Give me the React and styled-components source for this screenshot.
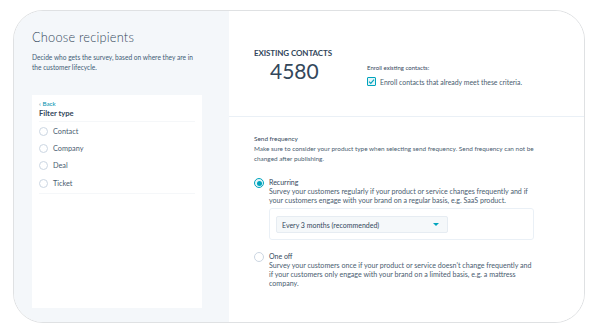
import React from "react";
import styled, { createGlobalStyle } from "styled-components";

const Global = createGlobalStyle`
  html, body { margin: 0; padding: 0; background: #fff; }
  body { font-family: Lato, "Noto Sans", sans-serif; color: #33475b; }
  * { box-sizing: border-box; }
`;

const Frame = styled.div`
  margin: 10px 0 0 13px;
  width: 572px;
  height: 313px;
  border: 1px solid #dfe1e3;
  border-radius: 30px;
  overflow: hidden;
  display: grid;
  grid-template-columns: 215px 1fr;
`;

const Sidebar = styled.aside`
  background: #f4f7fa;
  display: flex;
  flex-direction: column;
  padding: 17px 27px 14px 18px;
`;

const Title = styled.h1`
  margin: 0;
  font-size: 12.8px;
  font-weight: 300;
  letter-spacing: 0.2px;
  color: #33475b;
  line-height: 18px;
`;

const Lead = styled.p`
  margin: 6px 0 0;
  font-size: 6.6px;
  line-height: 10px;
  color: #425b76;
`;

const FilterCard = styled.div`
  margin-top: 23px;
  flex: 1;
  background: #fff;
  padding: 5px 7px;
  display: flex;
  flex-direction: column;
`;

const Back = styled.a`
  font-size: 6.3px;
  color: #0091ae;
  line-height: 8px;
`;

const FilterTitle = styled.div`
  font-size: 7.6px;
  font-weight: 700;
  color: #33475b;
  line-height: 10px;
  padding-bottom: 3px;
  border-bottom: 1px solid #f5f7f9;
`;

const OptionList = styled.div`
  display: flex;
  flex-direction: column;
  gap: 8.2px;
  padding: 5px 0 5px;
  border-bottom: 1px solid #f5f7f9;
`;

const Option = styled.label`
  display: flex;
  align-items: center;
  gap: 5px;
  font-size: 7.3px;
  color: #4a5d70;
  line-height: 9px;
`;

const Radio = styled.span`
  flex: none;
  width: ${p => p.$size || 9}px;
  height: ${p => p.$size || 9}px;
  border-radius: 50%;
  border: 1px solid ${p => (p.$on ? "#00a4bd" : "#cbd6e2")};
  background: ${p => (p.$on ? "#e5f5f8" : "#fff")};
  display: flex;
  align-items: center;
  justify-content: center;
  &::after {
    content: "";
    display: ${p => (p.$on ? "block" : "none")};
    width: 5px;
    height: 5px;
    border-radius: 50%;
    background: #00a4bd;
  }
`;

const Main = styled.main`
  background: #fff;
  display: flex;
  flex-direction: column;
  padding-top: 37px;
`;

const StatsRow = styled.section`
  display: flex;
  padding: 0 0 0 25px;
  height: 69px;
  border-bottom: 1px solid #eaf0f6;
`;

const Stat = styled.div`
  width: 113px;
  display: flex;
  flex-direction: column;
`;

const StatLabel = styled.div`
  font-size: 8px;
  font-weight: 700;
  letter-spacing: -0.1px;
  color: #33475b;
  line-height: 10px;
`;

const StatValue = styled.div`
  font-size: 21px;
  font-weight: 400;
  color: #33475b;
  line-height: 26px;
  padding-left: 16px;
`;

const Enroll = styled.div`
  padding-top: 16px;
  display: flex;
  flex-direction: column;
  gap: 5px;
`;

const SmallLabel = styled.div`
  font-size: 6px;
  color: #33475b;
  line-height: 8px;
`;

const CheckRow = styled.label`
  display: flex;
  align-items: center;
  gap: 4px;
  font-size: 6.9px;
  color: #4a5d70;
`;

const Checkbox = styled.span`
  width: 9px;
  height: 9px;
  border: 1px solid #00a4bd;
  background: #e5f5f8;
  border-radius: 1px;
  display: flex;
  align-items: center;
  justify-content: center;
`;

const Frequency = styled.section`
  padding: 17px 0 0 25px;
  display: flex;
  flex-direction: column;
`;

const SectionLabel = styled.div`
  font-size: 6.4px;
  color: #33475b;
  line-height: 9px;
`;

const SectionHelp = styled.p`
  margin: 1px 0 0;
  font-size: 6.4px;
  line-height: 10px;
  color: #4a5d70;
  width: 285px;
`;

const Choice = styled.div`
  display: flex;
  gap: 5px;
  margin-top: ${p => p.$mt}px;
`;

const ChoiceBody = styled.div`
  display: flex;
  flex-direction: column;
  width: 268px;
`;

const ChoiceTitle = styled.div`
  font-size: 7px;
  color: #33475b;
  line-height: 9px;
`;

const ChoiceText = styled.div`
  font-size: 7.1px;
  line-height: 9px;
  color: #4a5d70;
`;

const SelectBox = styled.div`
  margin-top: 3px;
  width: 265px;
  height: 32px;
  border: 1px solid #eaf0f6;
  border-radius: 3px;
  padding: 7px 6px;
`;

const Select = styled.div`
  width: 172px;
  height: 17px;
  background: #f5f8fa;
  border: 1px solid #e6ecf2;
  border-radius: 2px;
  display: flex;
  align-items: center;
  justify-content: space-between;
  padding: 0 8px 0 5px;
  font-size: 7px;
  color: #33475b;
`;

const Caret = styled.span`
  width: 0;
  height: 0;
  border-left: 3px solid transparent;
  border-right: 3px solid transparent;
  border-top: 3px solid #00a4bd;
`;

export default function App() {
  return (
    <>
      <Global />
      <Frame>
        <Sidebar>
          <Title>Choose recipients</Title>
          <Lead>
            Decide who gets the survey, based on where they are in the customer lifecycle.
          </Lead>
          <FilterCard>
            <Back>‹ Back</Back>
            <FilterTitle>Filter type</FilterTitle>
            <OptionList>
              {["Contact", "Company", "Deal", "Ticket"].map(o => (
                <Option key={o}>
                  <Radio />
                  {o}
                </Option>
              ))}
            </OptionList>
          </FilterCard>
        </Sidebar>
        <Main>
          <StatsRow>
            <Stat>
              <StatLabel>EXISTING CONTACTS</StatLabel>
              <StatValue>4580</StatValue>
            </Stat>
            <Enroll>
              <SmallLabel>Enroll existing contacts:</SmallLabel>
              <CheckRow>
                <Checkbox>
                  <svg width="7" height="7" viewBox="0 0 10 10">
                    <path d="M1.5 5.2 L4 7.6 L8.6 2.4" fill="none" stroke="#00a4bd" strokeWidth="1.6" />
                  </svg>
                </Checkbox>
                Enroll contacts that already meet these criteria.
              </CheckRow>
            </Enroll>
          </StatsRow>
          <Frequency>
            <SectionLabel>Send frequency</SectionLabel>
            <SectionHelp>
              Make sure to consider your product type when selecting send frequency. Send frequency can not be changed after publishing.
            </SectionHelp>
            <Choice $mt={14}>
              <Radio $on $size={10} />
              <ChoiceBody>
                <ChoiceTitle>Recurring</ChoiceTitle>
                <ChoiceText>
                  Survey your customers regularly if your product or service changes frequently and if your customers engage with your brand on a regular basis, e.g. SaaS product.
                </ChoiceText>
                <SelectBox>
                  <Select>
                    Every 3 months (recommended)
                    <Caret />
                  </Select>
                </SelectBox>
              </ChoiceBody>
            </Choice>
            <Choice $mt={12}>
              <Radio $size={10} />
              <ChoiceBody>
                <ChoiceTitle>One off</ChoiceTitle>
                <ChoiceText>
                  Survey your customers once if your product or service doesn't change frequently and if your customers only engage with your brand on a limited basis, e.g. a mattress company.
                </ChoiceText>
              </ChoiceBody>
            </Choice>
          </Frequency>
        </Main>
      </Frame>
    </>
  );
}
